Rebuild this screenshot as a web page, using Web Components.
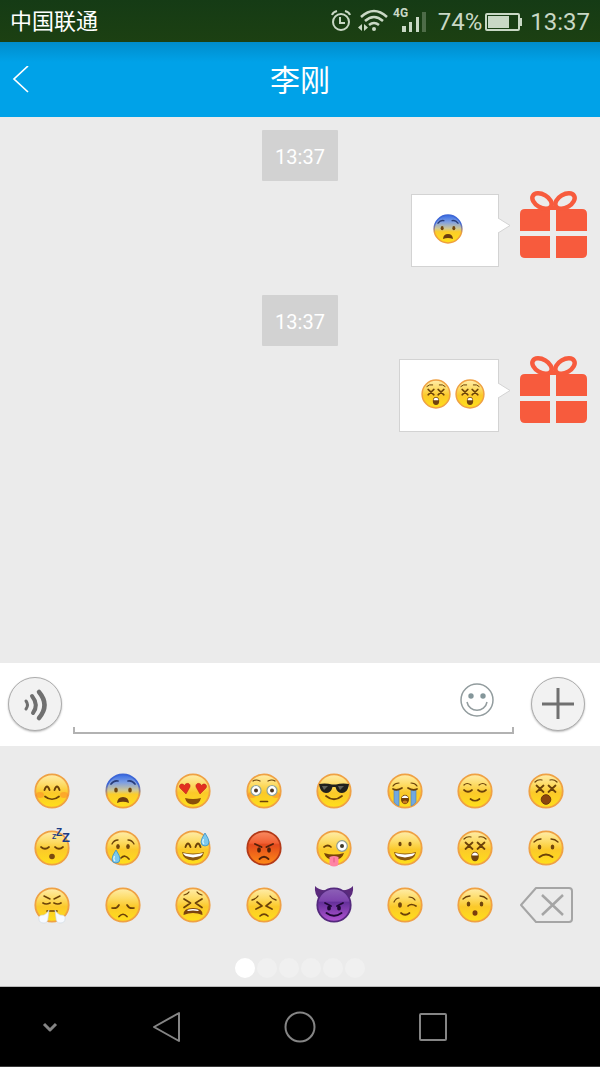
<!DOCTYPE html>
<html lang="zh-CN">
<head>
<meta charset="utf-8">
<meta name="viewport" content="width=device-width, initial-scale=1">
<title>李刚</title>
<style>
    body {
        margin: 0;
        background: #ebebeb;
        font-family: Roboto, "Noto Sans CJK SC", sans-serif;
    }
</style>
</head>
<body>
<chat-app></chat-app>

<script>
function define(name, html, setup) {
    const template = document.createElement("template");
    template.innerHTML = html;

    customElements.define(name, class extends HTMLElement {
        constructor() {
            super();
            this.attachShadow({ mode: "open" });
        }

        connectedCallback() {
            if (this.shadowRoot.firstChild) return;
            this.shadowRoot.appendChild(template.content.cloneNode(true));
            if (setup) setup(this, this.shadowRoot);
        }
    });
}

// parts shared by several faces, drawn round 0,0 with a radius of 17
const line = (d, w = 1.7, c = "#6b4209") => `<path d="${d}" fill="none" stroke="${c}" stroke-width="${w}" stroke-linecap="round" stroke-linejoin="round"/>`;
const dots = (x, y, rx = 1.8, ry = 2.5) => `<g fill="#70460d"><ellipse cx="${-x}" cy="${y}" rx="${rx}" ry="${ry}"/><ellipse cx="${x}" cy="${y}" rx="${rx}" ry="${ry}"/></g>`;
const brows = line("M-11-9Q-8-12-4-11M11-9Q8-12 4-11", 1.2);
const arches = line("M-7.5-1Q-5-8-2.5-1M2.5-1Q5-8 7.5-1", 1.9);
const crosses = line("M-9.5-5.5l7 6.5m0-6.5l-7 6.5M2.5-5.5l7 6.5m0-6.5l-7 6.5", 1.8);
const closed = line("M-11-1Q-7 2.5-3-1M3-1Q7 2.5 11-1", 1.7);
const squint = line("M-9-6L-2.5-2L-9 2.5M9-6L2.5-2L9 2.5", 1.7);
const blush = `<g fill="#ff6a2b" opacity=".35"><ellipse cx="-12" cy="4" rx="4" ry="3"/><ellipse cx="12" cy="4" rx="4" ry="3"/></g>`;
const grin = `<path d="M-11 4Q0 7 11 4Q10 12 0 12.5Q-10 12-11 4Z" fill="#8a5710"/><path d="M-10 5Q0 7.8 10 5Q9.5 8.5 0 9.5Q-9.5 8.5-10 5Z" fill="#fff"/>`;
const drop = (x, y) => `<path transform="translate(${x} ${y})" d="M0-7Q4-1 4 2A4 4 0 0 1-4 2Q-4-1 0-7Z" fill="#7cc9ee" stroke="#3a8fc4" stroke-width=".8"/><path transform="translate(${x} ${y})" d="M-1.5-1Q-3 2-1 4" fill="none" stroke="#d9f3ff" stroke-width="1.3"/>`;

const faces = {
    blush: blush + arches + line("M-7 5.5Q0 11 7 5.5"),
    fearful: line("M-12-7Q-9-11-5-10M12-7Q9-11 5-10", 1.7, "#293c78") + dots(7, -1) +
        `<path d="M-6 12Q-5.5 6 0 6Q5.5 6 6 12Q0 9.5-6 12Z" fill="#6b3d10"/>`,
    hearts: `<g fill="#e32f20" stroke="#b4231a" stroke-width=".5"><path d="M-7 3L-13-3C-15-6-11-9-8.5-5.5C-7-9-2-8-3-4Z"/><path d="M7 3L13-3C15-6 11-9 8.5-5.5C7-9 2-8 3-4Z"/></g>
        <path d="M-8 7Q0 9 8 7Q6.5 13.5 0 13.5Q-6.5 13.5-8 7Z" fill="#8a5009"/>`,
    flushed: blush + line("M-11-10Q-8-12-4-10M11-10Q8-12 4-10", 1.2) +
        `<g fill="#fff" stroke="#8fa49b" stroke-width="1.2"><circle cx="-8" cy="-.5" r="5"/><circle cx="8" cy="-.5" r="5"/></g><g fill="#4b3621"><circle cx="-8" cy="-.5" r="2"/><circle cx="8" cy="-.5" r="2"/></g>` + line("M-3.5 10.5h7"),
    cool: `<path d="M-15-7Q-8-8-2-6.5H2Q8-8 15-7L14.5-4.5Q13 2 8 2Q3 2 1.5-4H-1.5Q-3 2-8 2Q-13 2-14.5-4.5Z" fill="#20211d"/><path d="M-12-5l6 0l-4 4zM4-5h6l-4 4z" fill="#60625a"/>` + line("M-8 5Q0 11.5 8 5"),
    sob: `<g fill="#71a9df" stroke="#4c82bd" stroke-width=".6"><path d="M-11-1h5V15Q-9 14-11 11Z"/><path d="M11-1H6V15Q9 14 11 11Z"/></g>` +
        line("M-12-5Q-10-8-6-8M12-5Q10-8 6-8", 1.2) + line("M-12-2Q-8 0-3-3M12-2Q8 0 3-3") +
        `<ellipse cy="8.5" rx="4" ry="4.7" fill="#744108"/><path d="M-3 6Q0 3 3 6v1h-6z" fill="#fff"/><ellipse cy="11" rx="2.5" ry="1.5" fill="#c97a20"/>`,
    relieved: line("M-11-6Q-8-9-4-6M11-6Q8-9 4-6", 1.2) + closed + line("M-4.5 8Q0 11.5 4.5 8"),
    dizzy: brows + crosses + `<circle cy="8.5" r="4.8" fill="#8a450e" stroke="#6c370c"/>`,
    sleeping: closed + `<circle cy="8.5" r="2.8" fill="#7a4a10"/><g font-family="Liberation Sans" font-weight="bold" fill="#1c3c85"><text x="0" y="-9" font-size="7">Z</text><text x="4" y="-12" font-size="10">Z</text><text x="10" y="-6" font-size="13">Z</text></g>`,
    cry: line("M-11-4Q-9-8-5-8M11-4Q9-8 5-8", 1.3) + dots(5, -1.5) + line("M-2 10Q2 6 6 11") + drop(-7, 9),
    sweat: arches + grin + drop(12, -8),
    angry: line("M-9-4L-2.5-1M9-4L2.5-1", 1.9, "#50200a") + `<g fill="#50200a"><ellipse cx="-5" cy="2" rx="1.9" ry="2.7"/><ellipse cx="5" cy="2" rx="1.9" ry="2.7"/></g>` + line("M-4.5 11Q0 6.5 4.5 11", 1.8, "#50200a"),
    tongue: line("M-10-1Q-6-4-3-1") + `<circle cx="8" cy="-2" r="5.3" fill="#fff" stroke="#8f9f94" stroke-width="1.2"/><circle cx="8" cy="-2" r="2" fill="#3f3a2b"/>` +
        `<path d="M-10 5Q0 8 10 5Q8 12 0 12Q-8 12-10 5Z" fill="#774408"/><path d="M-4.5 9Q0 7 4.5 9V15Q4.5 18.5 0 18.5T-4.5 15Z" fill="#ff83a4"/>` + line("M0 10v4", .8, "#d94e79"),
    grinning: dots(5, -4, 1.6, 2.2) + grin,
    astonished: brows + crosses + `<ellipse cy="8.5" rx="3.8" ry="4.8" fill="#70430e"/><path d="M-2.8 6Q0 3 2.8 6v1.5h-5.6z" fill="#fff"/>`,
    worried: line("M-12-6Q-9-9-5-9M12-6Q9-9 5-9", 1.3) + dots(6.5, -1) + line("M-6.500 9Q0 4 6.5 9", 2),
    triumph: line("M-8-9L-2-6M8-9L2-6", 1.5) + line("M-9-2Q-6 0-2-2M9-2Q6 0 2-2") + line("M-5 6H5") +
        `<g fill="#f7faff" stroke="#ccd8e2" stroke-width=".6"><path d="M-3 5Q-5 9-8 10Q-14 10-13 14Q-13 18-8 18Q-4 18-4 13Z"/><path d="M3 5Q5 9 8 10Q14 10 13 14Q13 18 8 18Q4 18 4 13Z"/></g>`,
    disappointed: line("M-11 3Q-6 4-4 0M11 3Q6 4 4 0") + line("M-4 11.5Q0 7 4 11.5"),
    tired: line("M-9-10Q-5-11-4-13M9-10Q5-11 4-13", 1.2) + squint + `<path d="M-9.5 10Q-10 3 0 3Q10 3 9.5 10Q0 6-9.5 10Z" fill="#7b440f"/><path d="M-6 5Q0 3 6 5L5 6Q0 5-5 6Z" fill="#fff"/>`,
    persevere: line("M-12-5Q-8-6-6-9M12-5Q8-6 6-9", 1.3) + line("M-7-3L-2 1L-8 4M7-3L2 1L8 4") + line("M-4 11Q0 7 4 11"),
    devil: line("M-9-2L-3 1M9-2L3 1", 1.7, "#1e0735") + `<g fill="#1e0735"><ellipse cx="-5" cy="3" rx="1.9" ry="2.5"/><ellipse cx="5" cy="3" rx="1.9" ry="2.5"/></g>` + line("M-7.5 8Q0 13.5 7.5 8", 2, "#1e0735"),
    wink: line("M-11-3Q-9-7-6-7M4-8Q8-8 10-5", 1.2) + `<ellipse cx="-5" cy="0" rx="1.9" ry="2.8" fill="#70460d"/>` + line("M3 1Q6-2 11 1") + line("M-4 8Q0 11.5 4.5 8"),
    hushed: line("M-12-6Q-9-9-5-9M12-6Q9-9 5-9", 1.3) + dots(6.5, -1) + `<ellipse cy="8" rx="2.5" ry="2.7" fill="#7a3e0e"/>`,
};

const skins = {
    yellow: { rim: "#efa144", stops: [[0, "#ffedaa"], [.3, "#fddc68"], [.55, "#fbc92a"], [1, "#ffe01a"]] },
    blue: { rim: "url(#rim)", stops: [[0, "#356be5"], [.25, "#7f9fe2"], [.48, "#cfc794"], [.6, "#fccd29"], [1, "#ffe01a"]] },
    red: { rim: "#b33a18", stops: [[0, "#f98b62"], [.35, "#f16033"], [.4, "#e34a1d"], [1, "#ff8b16"]] },
    purple: { rim: "#54297d", stops: [[0, "#8d62b7"], [.38, "#7d43ad"], [.42, "#65309a"], [1, "#b354d4"]] },
};
const skinOf = { fearful: "blue", angry: "red", devil: "purple" };

define("emoji-face", /*html*/`
    <style>
    :host {
        display: block;
        width: 36px;
        height: 36px;
    }
    svg {
        display: block;
        width: 100%;
        height: 100%;
        overflow: visible;
    }
    </style>`, (host, root) => {
    const name = host.getAttribute("name");
    const skin = skins[skinOf[name] || "yellow"];
    const horns = name === "devil"
        ? `<path d="M-19-19Q-15-14-5-15L-14-6Q-20-10-19-19ZM19-19Q15-14 5-15L14-6Q20-10 19-19Z" fill="#5b2a7c"/>` : "";
    root.innerHTML += `
    <svg viewBox="-18 -18 36 36" aria-hidden="true">
      <defs>
        <linearGradient id="skin" x2="0" y2="1">${skin.stops.map(([o, c]) => `<stop offset="${o}" stop-color="${c}"/>`).join("")}</linearGradient>
        <linearGradient id="rim" x2="0" y2="1"><stop offset=".3" stop-color="#3d66d6"/><stop offset=".65" stop-color="#ef9f3c"/></linearGradient>
      </defs>
      ${horns}
      <circle r="16.7" fill="url(#skin)" stroke="${skin.rim}" stroke-width="1.8"/>
      ${faces[name]}
    </svg>`;
});

define("status-bar", /*html*/`
    <style>
    :host {
        display: flex;
        align-items: center;
        justify-content: space-between;
        height: 42px;
        padding: 2px 10px 0;
        box-sizing: border-box;
        background: linear-gradient(#153b15, #1c4012);
        color: #c9d8c5;
        font-size: 24px;
        line-height: 32px;
    }
    .carrier {
        color: #fff;
        font-size: 22px;
    }
    .right, .icons, .power {
        display: flex;
        align-items: center;
    }
    .icons { gap: 6px; padding-bottom: 2px; }
    .power { gap: 3px; margin: 0 8px 0 12px; }
    svg { display: block; overflow: visible; }
    </style>
    <span class="carrier">中国联通</span>
    <div class="right">
      <div class="icons">
        <svg width="21" height="24" viewBox="0 0 21 24" fill="none" stroke="#c9d8c5" stroke-width="2">
          <circle cx="10" cy="13" r="8"/><path d="M9 8v6h5M1 6Q2 3 6 2M19 6Q18 3 14 2"/>
        </svg>
        <svg width="30" height="24" viewBox="0 0 30 24" fill="none" stroke="#c9d8c5" stroke-width="2.500">
          <path d="M3 8Q16-4 29 8M7 12Q16 4 25 12M11 16Q16 12 21 16"/>
          <circle cx="16" cy="20" r="2" fill="#c9d8c5" stroke="none"/>
          <path d="M4 15v7l-4-3.500zM6 15v7l4-3.500z" fill="#c9d8c5" stroke="none"/>
        </svg>
        <svg width="32" height="28" viewBox="0 0 32 28" fill="#c9d8c5">
          <text x="-1" y="10" font-family="Roboto" font-weight="700" font-size="12">4G</text>
          <path d="M8 19h4v6H8zM15 15h3v10h-3zM22 10h3v15h-3z"/><path d="M28 5h4v20h-4z" opacity=".3"/>
        </svg>
      </div>
      <div class="power">
        <span>74%</span>
        <svg width="37" height="18" viewBox="0 0 37 18" fill="none" stroke="#c9d8c5" stroke-width="2">
          <rect x="1" y="1" width="33" height="16" rx="1"/><path d="M36 5v8"/><path d="M3 3h21v12H3z" fill="#c9d8c5" stroke="none"/>
        </svg>
      </div>
      <span>13:37</span>
    </div>`);

define("chat-header", /*html*/`
    <style>
    :host {
        display: grid;
        grid-template-columns: 56px 1fr 56px;
        align-items: center;
        height: 75px;
        background: linear-gradient(#008ccb, #00a2e8 20px);
        color: #fff;
    }
    button {
        height: 75px;
        padding: 0 0 0 12px;
        border: 0;
        background: none;
    }
    svg { display: block; }
    h1 {
        margin: 0;
        padding-top: 2px;
        font-size: 30px;
        line-height: 40px;
        font-weight: 400;
        text-align: center;
    }
    </style>
    <button aria-label="返回">
      <svg width="18" height="28" viewBox="0 0 18 28" fill="none" stroke="#fff" stroke-width="1.700"><path d="M16 0L2 13L16 26"/></svg>
    </button>
    <h1><slot></slot></h1>`);

define("time-badge", /*html*/`
    <style>
    :host {
        display: block;
        align-self: center;
        margin-bottom: 10px;
        padding: 15px 13px 12px;
        border-radius: 1px;
        background: #d2d2d2;
        color: #fff;
        font-size: 20px;
        line-height: 24px;
    }
    </style>
    <slot></slot>`);

define("gift-avatar", /*html*/`
    <style>
    :host { display: block; }
    svg { display: block; }
    </style>
    <svg width="67" height="67" viewBox="0 0 67 67" fill="#f75b3d">
      <path d="M0 23Q0 18 5 18H30V40H0ZM36 18H62Q67 18 67 23V40H36ZM0 45H30V67H5Q0 67 0 62ZM36 45H67V62Q67 67 62 67H36Z"/>
      <g fill="none" stroke="#f75b3d" stroke-width="4.500">
        <ellipse cx="22" cy="10" rx="10.500" ry="6.500" transform="rotate(30 22 10)"/>
        <ellipse cx="45" cy="10" rx="10.500" ry="6.500" transform="rotate(-30 45 10)"/>
      </g>
      <path d="M29 15h9l1 4H28z"/>
    </svg>`);

define("chat-message", /*html*/`
    <style>
    :host {
        display: flex;
        justify-content: flex-end;
        align-items: flex-start;
        gap: 21px;
        margin-bottom: 28px;
        padding-right: 13px;
    }
    .bubble {
        position: relative;
        display: flex;
        gap: 4px;
        box-sizing: border-box;
        min-width: 88px;
        margin-top: 3px;
        padding: 19px 13px 22px 21px;
        border: 1px solid #d3d3d3;
        background: #fff;
    }
    .tail {
        position: absolute;
        left: 100%;
        top: 22px;
    }
    ::slotted(emoji-face) {
        width: 30px;
        height: 30px;
    }
    </style>
    <div class="bubble">
      <slot></slot>
      <svg class="tail" width="13" height="18" viewBox="0 0 13 18"><path d="M0 1L12 8.500L0 16" fill="#fff" stroke="#d3d3d3"/><path d="M0 2V15" stroke="#fff" stroke-width="2"/></svg>
    </div>
    <gift-avatar></gift-avatar>`);

define("message-bar", /*html*/`
    <style>
    :host {
        display: flex;
        align-items: center;
        padding: 11px 15px 12px 8px;
        background: #fff;
    }
    button {
        flex: none;
        padding: 0;
        border: 0;
        background: none;
    }
    .round {
        display: grid;
        place-items: center;
        width: 54px;
        height: 54px;
        box-sizing: border-box;
        border: 1px solid #acacac;
        border-radius: 50%;
        background: #f2f2f2;
        box-shadow: 0 1px 2px #bbb;
    }
    .field {
        display: flex;
        align-items: center;
        flex: 1;
        min-width: 0;
        height: 60px;
        box-sizing: border-box;
        margin: 0 17px 0 11px;
        padding: 0 20px 8px 8px;
        background:
            linear-gradient(#b2b2b2, #b2b2b2) left bottom / 2px 7px,
            linear-gradient(#b2b2b2, #b2b2b2) right bottom / 2px 7px,
            linear-gradient(#b2b2b2, #b2b2b2) left bottom / 100% 2px;
        background-repeat: no-repeat;
    }
    input {
        flex: 1;
        min-width: 0;
        height: 40px;
        padding: 0;
        border: 0;
        outline: 0;
        background: none;
        font: 22px Roboto, "Noto Sans CJK SC", sans-serif;
    }
    svg { display: block; }
    </style>
    <button class="round" aria-label="语音">
      <svg width="54" height="54" viewBox="0 0 54 54" fill="none" stroke="#707070" stroke-linecap="round"><path d="M17 23Q20 27 17 31" stroke-width="3"/><path d="M23 18Q30 27 24 35" stroke-width="4"/><path d="M30 14Q41 27 30 40" stroke-width="4.500"/></svg>
    </button>
    <div class="field">
      <input type="text" aria-label="消息">
      <button aria-label="表情">
        <svg width="34" height="34" viewBox="0 0 34 34" fill="none" stroke="#929c9e" stroke-width="1.500"><circle cx="17" cy="17" r="16"/><path d="M7 19C9 30 25 30 27 19"/><g fill="#84969a" stroke="none"><circle cx="11" cy="13" r="2.700"/><circle cx="23" cy="13" r="2.700"/></g></svg>
      </button>
    </div>
    <button class="round" aria-label="更多">
      <svg width="32" height="32" viewBox="0 0 32 32" stroke="#707070" stroke-width="3"><path d="M16 0v31M0 16h32"/></svg>
    </button>`);

define("emoji-panel", /*html*/`
    <style>
    :host {
        display: block;
        padding: 16px 18px 8px 17px;
        border-bottom: 1px solid #b8b8b8;
        background: #ebebeb;
    }
    .grid {
        display: grid;
        grid-template-columns: repeat(8, 1fr);
        grid-auto-rows: 57px;
        margin-right: 1px;
    }
    .grid button {
        display: grid;
        place-items: center;
        padding: 0;
        border: 0;
        background: none;
    }
    .pages {
        display: flex;
        justify-content: center;
        gap: 2px;
        margin-top: 25px;
    }
    .pages button {
        width: 20px;
        height: 20px;
        padding: 0;
        border: 0;
        border-radius: 50%;
        background: #f0f0f0;
    }
    .pages button:first-child { background: #fff; }
    svg { display: block; }
    </style>
    <div class="grid">
      <button class="delete" aria-label="删除">
        <svg width="54" height="38" viewBox="0 0 54 38" fill="none" stroke="#a5a5a5" stroke-width="2"><path d="M2 19L17 2H50Q53 2 53 5V33Q53 36 50 36H17Z" stroke-linejoin="round"/><path d="M23 9L44 29M44 9L23 29" stroke-width="2.500"/></svg>
      </button>
    </div>
    <div class="pages"></div>`, (host, root) => {
    const del = root.querySelector(".delete");
    for (const name of Object.keys(faces)) {
        const button = document.createElement("button");
        button.setAttribute("aria-label", name);
        button.innerHTML = `<emoji-face name="${name}"></emoji-face>`;
        del.before(button);
    }
    const pages = root.querySelector(".pages");
    for (let i = 1; i <= 6; i++) {
        const dot = document.createElement("button");
        dot.setAttribute("aria-label", `第${i}页`);
        pages.appendChild(dot);
    }
});

define("nav-bar", /*html*/`
    <style>
    :host {
        display: grid;
        grid-template-columns: 3fr 4fr 4fr 4fr 3fr;
        height: 80px;
        box-sizing: border-box;
        border-bottom: 1px solid #3a3a3a;
        background: #000;
    }
    button {
        display: grid;
        place-items: center;
        padding: 0;
        border: 0;
        background: none;
    }
    svg {
        display: block;
        fill: none;
        stroke: #858585;
        stroke-width: 2;
        stroke-linejoin: round;
    }
    </style>
    <button aria-label="收起"><svg width="32" height="32" viewBox="0 0 32 32"><path d="M10 13l6 6l6-6" stroke-width="3"/></svg></button>
    <button aria-label="返回"><svg width="32" height="32" viewBox="0 0 32 32"><path d="M3 16L28 2V30Z"/></svg></button>
    <button aria-label="主页"><svg width="32" height="32" viewBox="0 0 32 32"><circle cx="16" cy="16" r="14.500"/></svg></button>
    <button aria-label="最近任务"><svg width="32" height="32" viewBox="0 0 32 32"><rect x="3" y="3" width="26" height="26" rx="1"/></svg></button>`);

define("chat-app", /*html*/`
    <style>
    :host {
        display: flex;
        flex-direction: column;
        min-height: 100vh;
    }
    main {
        display: flex;
        flex-direction: column;
        flex: 1;
        padding-top: 13px;
    }
    </style>
    <status-bar></status-bar>
    <chat-header>李刚</chat-header>
    <main>
      <time-badge>13:37</time-badge>
      <chat-message><emoji-face name="fearful"></emoji-face></chat-message>
      <time-badge>13:37</time-badge>
      <chat-message><emoji-face name="astonished"></emoji-face><emoji-face name="astonished"></emoji-face></chat-message>
    </main>
    <message-bar></message-bar>
    <emoji-panel></emoji-panel>
    <nav-bar></nav-bar>`);
</script>
</body>
</html>
